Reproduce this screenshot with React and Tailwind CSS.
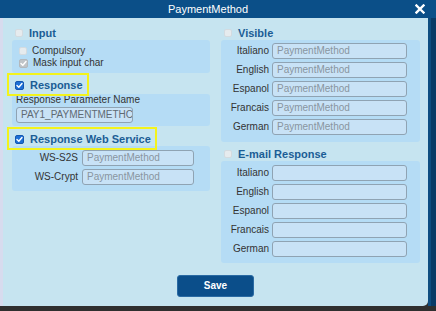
import React from "react";

function Box({ state = "off" }) {
  if (state === "off") {
    return <span className="block w-[8px] h-[8px] rounded-[2px] bg-[#e6ebee] border border-[#d3dbe0] shrink-0" />;
  }
  const bg = state === "on" ? "bg-[#1c6fd6] border-[#1557b0]" : "bg-[#bfc4c8] border-[#b3b8bc]";
  return (
    <span className={`flex items-center justify-center w-[9px] h-[9px] rounded-[2px] border shrink-0 ${bg}`}>
      <svg width="7" height="7" viewBox="0 0 7 7">
        <path d="M1 3.6 L2.8 5.3 L6 1.5" fill="none" stroke="white" strokeWidth="1.4" strokeLinecap="round" strokeLinejoin="round" />
      </svg>
    </span>
  );
}

function Field({ value = "", w, dark }) {
  return (
    <div className={`h-[16px] ${w} rounded-[3px] border border-[#8fa3b3] bg-[#c8e2f6] flex items-center pl-[4px] text-[10px] leading-none ${dark ? "text-[#5f6a73]" : "text-[#8995a0]"} overflow-hidden whitespace-nowrap`}>
      {value}
    </div>
  );
}

function Header({ label, state, boxed }) {
  return (
    <div
      className={`relative z-10 w-fit flex items-center gap-[6px] border-2 pl-[6px] pr-[4px] ${
        boxed ? "border-[#f3f31c] h-[23px] pt-[2px]" : "border-transparent h-[14px]"
      }`}
    >
      <Box state={state} />
      <span className="text-[11px] font-bold text-[#1b5d95] leading-none">{label}</span>
    </div>
  );
}

function LangRows({ value }) {
  const langs = ["Italiano", "English", "Espanol", "Francais", "German"];
  return (
    <div className="flex flex-col gap-[3px]">
      {langs.map((l) => (
        <div key={l} className="flex items-center gap-[3px]">
          <span className="w-[48px] text-right text-[10px] text-[#333] leading-none">{l}</span>
          <Field value={value} w="w-[135px]" />
        </div>
      ))}
    </div>
  );
}

export default function App() {
  return (
    <div className="w-[436px] h-[311px] flex flex-col bg-[#2f2f2f] font-['Liberation_Sans',Arial,sans-serif] overflow-hidden">
      <div className="h-[18px] bg-[#0b4f88] flex items-center shrink-0">
        <div className="w-[30px]" />
        <div className="flex-1 text-center text-white text-[11px] leading-none">PaymentMethod</div>
        <div className="w-[50px] flex justify-end pr-[11px]">
          <svg width="10" height="10" viewBox="0 0 10 10">
            <path d="M1.5 1.5 L8.5 8.5 M8.5 1.5 L1.5 8.5" stroke="white" strokeWidth="2.4" strokeLinecap="square" />
          </svg>
        </div>
      </div>
      <div className="flex h-[288px] shrink-0">
        <div className="w-[3px] bg-[#d7dbee]" />
        <div className="w-[425px] bg-[#c6e4f0] rounded-br-[5px] flex flex-col pt-[8px] pl-[4px]">
          <div className="flex gap-[11px] h-[237px]">
            {/* left column */}
            <div className="w-[203px] flex flex-col">
              <Header label="Input" state="off" />
              <div className="ml-[5px] w-[198px] rounded-[3px] bg-[#b5dcf5] pt-[5px] pb-[4px] pl-[7px] flex flex-col">
                <div className="h-[12px] flex items-center gap-[5px]">
                  <Box state="off" />
                  <span className="text-[10px] text-[#333] leading-none">Compulsory</span>
                </div>
                <div className="h-[12px] flex items-center gap-[5px]">
                  <Box state="dis" />
                  <span className="text-[10px] text-[#333] leading-none">Mask input char</span>
                </div>
              </div>
              <Header label="Response" state="on" boxed />
              <div className="-mt-[2px] ml-[5px] w-[198px] rounded-[3px] bg-[#b5dcf5] pb-[3px] pl-[4px] flex flex-col">
                <div className="h-[12px] flex items-center text-[10px] text-[#333] leading-none">Response Parameter Name</div>
                <div className="mt-[1px]">
                  <Field value="PAY1_PAYMENTMETHC" w="w-[117px]" dark />
                </div>
              </div>
              <div className="mt-[1px]">
                <Header label="Response Web Service" state="on" boxed />
              </div>
              <div className="-mt-[4px] ml-[5px] w-[198px] rounded-[3px] bg-[#b5dcf5] pt-[4px] pb-[6px] flex flex-col gap-[3px]">
                <div className="flex items-center gap-[4px]">
                  <span className="w-[66px] text-right text-[10px] text-[#333] leading-none">WS-S2S</span>
                  <Field value="PaymentMethod" w="w-[112px]" />
                </div>
                <div className="flex items-center gap-[4px]">
                  <span className="w-[66px] text-right text-[10px] text-[#333] leading-none">WS-Crypt</span>
                  <Field value="PaymentMethod" w="w-[112px]" />
                </div>
              </div>
            </div>
            {/* right column */}
            <div className="w-[199px] flex flex-col">
              <div className="h-[14px] flex items-center gap-[6px] pl-[3px]">
                <Box state="off" />
                <span className="text-[11px] font-bold text-[#1b5d95] leading-none">Visible</span>
              </div>
              <div className="rounded-[3px] bg-[#b5dcf5] pt-[3px] pb-[7px]">
                <LangRows value="PaymentMethod" />
              </div>
              <div className="mt-[5px] h-[14px] flex items-center gap-[6px] pl-[3px]">
                <Box state="off" />
                <span className="text-[11px] font-bold text-[#1b5d95] leading-none">E-mail Response</span>
              </div>
              <div className="rounded-[3px] bg-[#b5dcf5] pt-[4px] pb-[6px]">
                <LangRows value="" />
              </div>
            </div>
          </div>
          <div className="flex justify-center mt-[12px] pr-[4px]">
            <button className="w-[77px] h-[22px] rounded-[3px] bg-[#0b4e8a] border border-[#2a6aa3] text-white text-[10px] font-bold leading-none">
              Save
            </button>
          </div>
        </div>
        <div className="w-[3px] bg-[#0f4d80]" />
        <div className="flex-1 bg-[#093a66]" />
      </div>
      <div className="flex-1 bg-[#2f2f2f]" />
    </div>
  );
}
